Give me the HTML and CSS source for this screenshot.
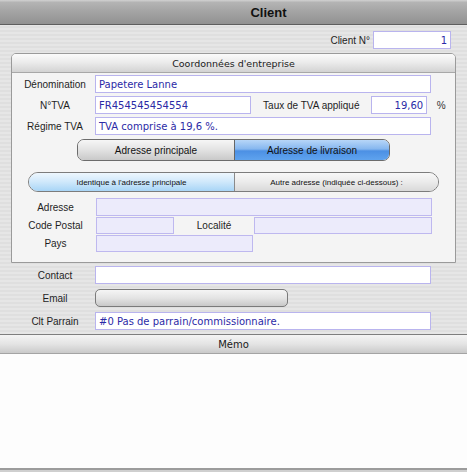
FILE: index.html
```html
<!DOCTYPE html>
<html lang="fr">
<head>
<meta charset="utf-8">
<title>Client</title>
<link rel="stylesheet" href="styles.css">
</head>
<body>
<div class="window">
  <header class="titlebar"><span>Client</span></header>
  <div class="content">
    <div class="client-no">
      <span class="label-inline">Client N°</span>
      <div class="field num w-client">1</div>
    </div>
    <section class="group">
      <div class="group-head">Coordonnées d'entreprise</div>
      <div class="group-body">
        <div class="row">
          <span class="label">Dénomination</span>
          <div class="field w-full">Papetere Lanne</div>
        </div>
        <div class="row">
          <span class="label">N°TVA</span>
          <div class="field w-half">FR454545454554</div>
          <span class="label-mid">Taux de TVA appliqué</span>
          <div class="field num w-taux">19,60</div>
          <span class="pct">%</span>
        </div>
        <div class="row">
          <span class="label">Régime TVA</span>
          <div class="field w-full">TVA comprise à 19,6 %.</div>
        </div>
        <div class="seg seg-big">
          <div class="seg-item off">Adresse principale</div>
          <div class="seg-item on">Adresse de livraison</div>
        </div>
        <div class="seg seg-small">
          <div class="seg-item on">Identique à l'adresse principale</div>
          <div class="seg-item off">Autre adresse (indiquée ci-dessous) :</div>
        </div>
        <div class="addr">
          <div class="row arow first">
            <span class="label alabel">Adresse</span>
            <div class="field dis w-addr"></div>
          </div>
          <div class="row arow">
            <span class="label alabel">Code Postal</span>
            <div class="field dis w-cp"></div>
            <span class="label-loc">Localité</span>
            <div class="field dis w-loc"></div>
          </div>
          <div class="row arow">
            <span class="label alabel">Pays</span>
            <div class="field dis w-pays"></div>
          </div>
        </div>
      </div>
    </section>
    <div class="outer-rows">
      <div class="row orow">
        <span class="label">Contact</span>
        <div class="field w-full"></div>
      </div>
      <div class="row orow">
        <span class="label">Email</span>
        <div class="button w-email"></div>
      </div>
      <div class="row orow">
        <span class="label">Clt Parrain</span>
        <div class="field w-full">#0 Pas de parrain/commissionnaire.</div>
      </div>
    </div>
  </div>
  <div class="memo-head">Mémo</div>
  <div class="memo-body"></div>
  <div class="bottom"></div>
</div>
</body>
</html>
```
FILE: styles.css
```css
* { box-sizing: border-box; }
html, body { margin: 0; padding: 0; }
body {
  width: 467px;
  height: 472px;
  overflow: hidden;
  font-family: "Liberation Sans", Arial, sans-serif;
  color: #1e1e1e;
}
.window {
  height: 472px;
  display: flex;
  flex-direction: column;
  background: repeating-linear-gradient(to bottom, #e6e6e6 0, #e6e6e6 2px, #dfdfdf 2px, #dfdfdf 4px);
}
.titlebar {
  height: 25px;
  flex: none;
  display: flex;
  align-items: center;
  justify-content: center;
  padding-left: 70px;
  background: linear-gradient(to bottom, #d2d2d2 0, #b4b4b4 10%, #a3a3a3 50%, #919191 100%);
  border-bottom: 1px solid #5e5e5e;
  font-weight: bold;
  font-size: 13px;
  color: #111;
}
.content {
  flex: none;
  padding: 6px 11px 4px 11px;
}
.client-no {
  display: flex;
  justify-content: flex-end;
  align-items: center;
  gap: 3px;
  padding-right: 5px;
  height: 18px;
}
.label-inline { font-size: 10px; }
.field {
  height: 18px;
  border: 1px solid #b9b4ee;
  background: #fff;
  font-family: "DejaVu Sans", sans-serif;
  font-size: 10px;
  color: #2b2aa6;
  display: flex;
  align-items: center;
  padding: 0 3px;
  white-space: nowrap;
}
.field.num { justify-content: flex-end; }
.field.dis { background: #ecebfb; border-color: #beb8ef; }
.w-client { width: 78px; }
.w-full { width: 336px; }
.w-half { width: 157px; }
.w-taux { width: 56px; }
.w-addr { width: 336px; }
.w-cp { width: 78px; }
.w-loc { width: 178px; }
.w-pays { width: 157px; }
.w-email { width: 193px; }

.group {
  margin-top: 4px;
  width: 445px;
  border: 1px solid #9a9a9a;
  border-radius: 5px 5px 0 0;
  background: #f4f4f4;
}
.group-head {
  height: 19px;
  display: flex;
  align-items: center;
  justify-content: center;
  border-bottom: 1px solid #a8a8a8;
  border-radius: 4px 4px 0 0;
  background: linear-gradient(to bottom, #fbfbfb 0, #ececec 45%, #d3d3d3 100%);
  font-family: "DejaVu Sans", sans-serif;
  font-size: 9.5px;
  color: #1a1a1a;
}
.group-body {
  padding: 2px 0 10px 3px;
  display: flex;
  flex-direction: column;
}
.row {
  display: flex;
  align-items: center;
  height: 18px;
}
.group-body > .row + .row { margin-top: 3px; }
.label {
  width: 80px;
  flex: none;
  text-align: center;
  font-size: 10px;
  color: #1e1e1e;
}
.label-mid {
  width: 121px;
  text-align: center;
  font-size: 10px;
}
.pct {
  width: 28px;
  text-align: center;
  font-size: 10px;
  color: #333;
}
.seg {
  display: flex;
  align-self: center;
  margin-left: -3px;
  overflow: hidden;
}
.seg-big {
  margin-top: 4px;
  width: 313px;
  height: 22px;
  border: 1px solid #6c6c6c;
  border-radius: 7px;
  font-size: 10px;
}
.seg-small {
  margin-top: 11px;
  width: 411px;
  height: 20px;
  border: 1px solid #7c7c7c;
  border-radius: 10px;
  font-size: 8px;
}
.seg-item {
  flex: 1;
  display: flex;
  align-items: center;
  justify-content: center;
  color: #111;
  white-space: nowrap;
}
.seg-big .seg-item.off {
  background: linear-gradient(to bottom, #f6f6f6 0, #e2e2e2 50%, #c9c9c9 100%);
  border-right: 1px solid #666;
  flex: 0 0 157px;
}
.seg-big .seg-item.on {
  background: linear-gradient(to bottom, #b7d6f8 0, #86b7ef 45%, #4c90e4 55%, #5fa3ee 100%);
}
.seg-small .seg-item.on {
  background: linear-gradient(to bottom, #eef7fe 0, #cfe8fb 50%, #a8d5f6 100%);
  border-right: 1px solid #8a8a8a;
  flex: 0 0 206px;
}
.seg-small .seg-item.off {
  background: linear-gradient(to bottom, #f8f8f8 0, #ebebeb 50%, #d9d9d9 100%);
}
.addr { margin-top: 6px; display: flex; flex-direction: column; }
.arow.first { height: 18px; }
.arow + .arow { margin-top: 1px; height: 17px; }
.arow .field { height: 100%; }
.alabel { width: 81px; }
.label-loc {
  width: 80px;
  text-align: center;
  font-size: 10px;
  align-self: stretch;
  display: flex;
  align-items: center;
  justify-content: center;
  background: #f4f4f4;
}

.outer-rows {
  padding-left: 4px;
  display: flex;
  flex-direction: column;
}
.orow { margin-top: 5px; }
.orow:first-child { margin-top: 3px; }
.button {
  height: 18px;
  border: 1px solid #7a7a7a;
  border-radius: 5px;
  background: linear-gradient(to bottom, #f5f5f5 0, #e4e4e4 50%, #c8c8c8 100%);
}
.memo-head {
  flex: none;
  height: 20px;
  border-top: 1px solid #7e7e7e;
  border-bottom: 1px solid #a4a4a4;
  background: linear-gradient(to bottom, #f4f4f4 0, #e4e4e4 50%, #cacaca 100%);
  display: flex;
  align-items: center;
  justify-content: center;
  font-family: "DejaVu Sans", sans-serif;
  font-size: 10px;
  color: #1a1a1a;
}
.memo-body {
  flex: 1;
  background: #fdfdfd;
}
.bottom {
  flex: none;
  height: 4px;
  border-top: 2px solid #9c9c9c;
  background: #cfcfcf;
}
```
